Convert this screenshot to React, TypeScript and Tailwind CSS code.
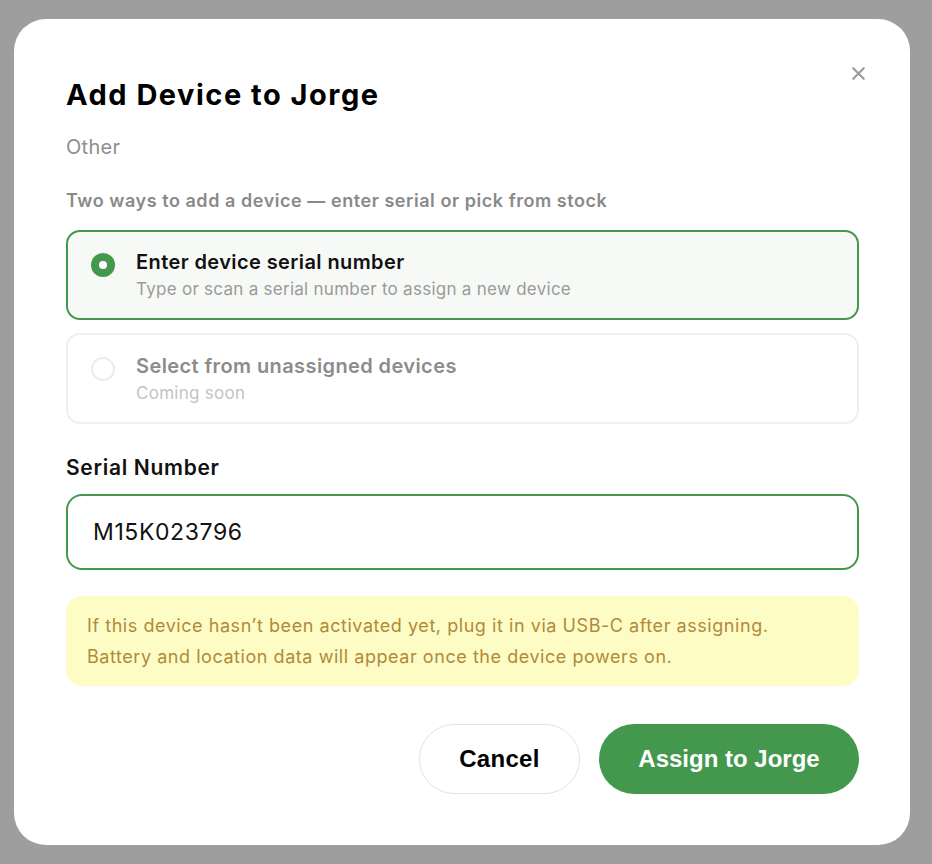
import { X } from 'lucide-react'

const inter = { fontFamily: 'Inter, "Noto Sans", sans-serif' }

interface OptionProps {
  title: string
  hint: string
  active?: boolean
}

function Option({ title, hint, active }: OptionProps) {
  return (
    <div
      className={
        active
          ? 'flex h-[90px] items-center rounded-[14px] border-2 border-[#43984e] bg-[#f7f9f6] pl-[23px]'
          : 'flex h-[91px] items-center rounded-[14px] border-2 border-[#efefef] bg-white pl-[23px]'
      }
    >
      <div className="flex items-start gap-[21px]">
        {active ? (
          <span className="mt-[3px] flex h-6 w-6 items-center justify-center rounded-full bg-[#43984e]">
            <span className="h-2 w-2 rounded-full bg-white" />
          </span>
        ) : (
          <span className="mt-[3px] h-6 w-6 rounded-full border-2 border-[#ececec]" />
        )}
        <div className="flex flex-col">
          <span
            className={
              active
                ? 'text-[20px] font-semibold leading-6 tracking-[0.4px] text-[#111]'
                : 'text-[20px] font-semibold leading-6 tracking-[0.4px] text-[#8c8c8c]'
            }
          >
            {title}
          </span>
          <span
            className={
              active
                ? 'mt-[4px] text-[17px] leading-[22px] tracking-[0.27px] text-[#9a9a9a]'
                : 'mt-[4px] text-[17px] leading-[22px] tracking-[0.27px] text-[#c4c4c4]'
            }
          >
            {hint}
          </span>
        </div>
      </div>
    </div>
  )
}

export default function App() {
  return (
    <div className="h-[864px] w-[932px] bg-[#9e9e9e] pl-[14px] pt-[19px]" style={inter}>
      <div className="relative flex h-[826px] w-[896px] flex-col rounded-[32px] bg-white pl-[52px] pr-[51px] pt-[58px]">
        <button className="absolute right-[41px] top-[44px] text-[#9a9a9a]">
          <X className="h-[21px] w-[21px]" strokeWidth={2.5} />
        </button>

        <h1 className="text-[29px] font-bold leading-9 tracking-[1.5px] text-black">
          Add Device to Jorge
        </h1>
        <p className="mt-5 text-[20px] leading-7 tracking-[0.3px] text-[#8e8e8e]">Other</p>
        <p className="mt-7 text-[18px] font-semibold leading-6 tracking-[0.55px] text-[#8a8a8a]">
          Two ways to add a device — enter serial or pick from stock
        </p>

        <div className="mt-[17px] flex flex-col gap-[13px]">
          <Option
            active
            title="Enter device serial number"
            hint="Type or scan a serial number to assign a new device"
          />
          <Option title="Select from unassigned devices" hint="Coming soon" />
        </div>

        <label className="mt-[30px] text-[21px] font-semibold leading-7 tracking-[0.7px] text-[#111]">
          Serial Number
        </label>
        <div className="mt-3 flex h-[76px] items-center rounded-[16px] border-2 border-[#43984e] px-[25px]">
          <span className="text-[23px] tracking-[0.6px] text-[#111]">M15K023796</span>
        </div>

        <div className="mt-[26px] flex h-[90px] flex-col justify-center rounded-[16px] bg-[#fefcc5] px-[21px] text-[18px] leading-[31px] tracking-[0.55px] text-[#b08a3a]">
          <p>If this device hasn’t been activated yet, plug it in via USB-C after assigning.</p>
          <p>Battery and location data will appear once the device powers on.</p>
        </div>

        <div
          className="mt-[38px] flex justify-end gap-[19px]"
          style={{ fontFamily: '"Liberation Sans", Arial, sans-serif' }}
        >
          <button className="h-[70px] w-[161px] rounded-full border border-[#e2e2e2] bg-white text-[24px] font-bold tracking-[0.3px] text-black">
            Cancel
          </button>
          <button className="h-[70px] w-[260px] rounded-full bg-[#43984e] text-[24px] font-bold text-white">
            Assign to Jorge
          </button>
        </div>
      </div>
    </div>
  )
}
